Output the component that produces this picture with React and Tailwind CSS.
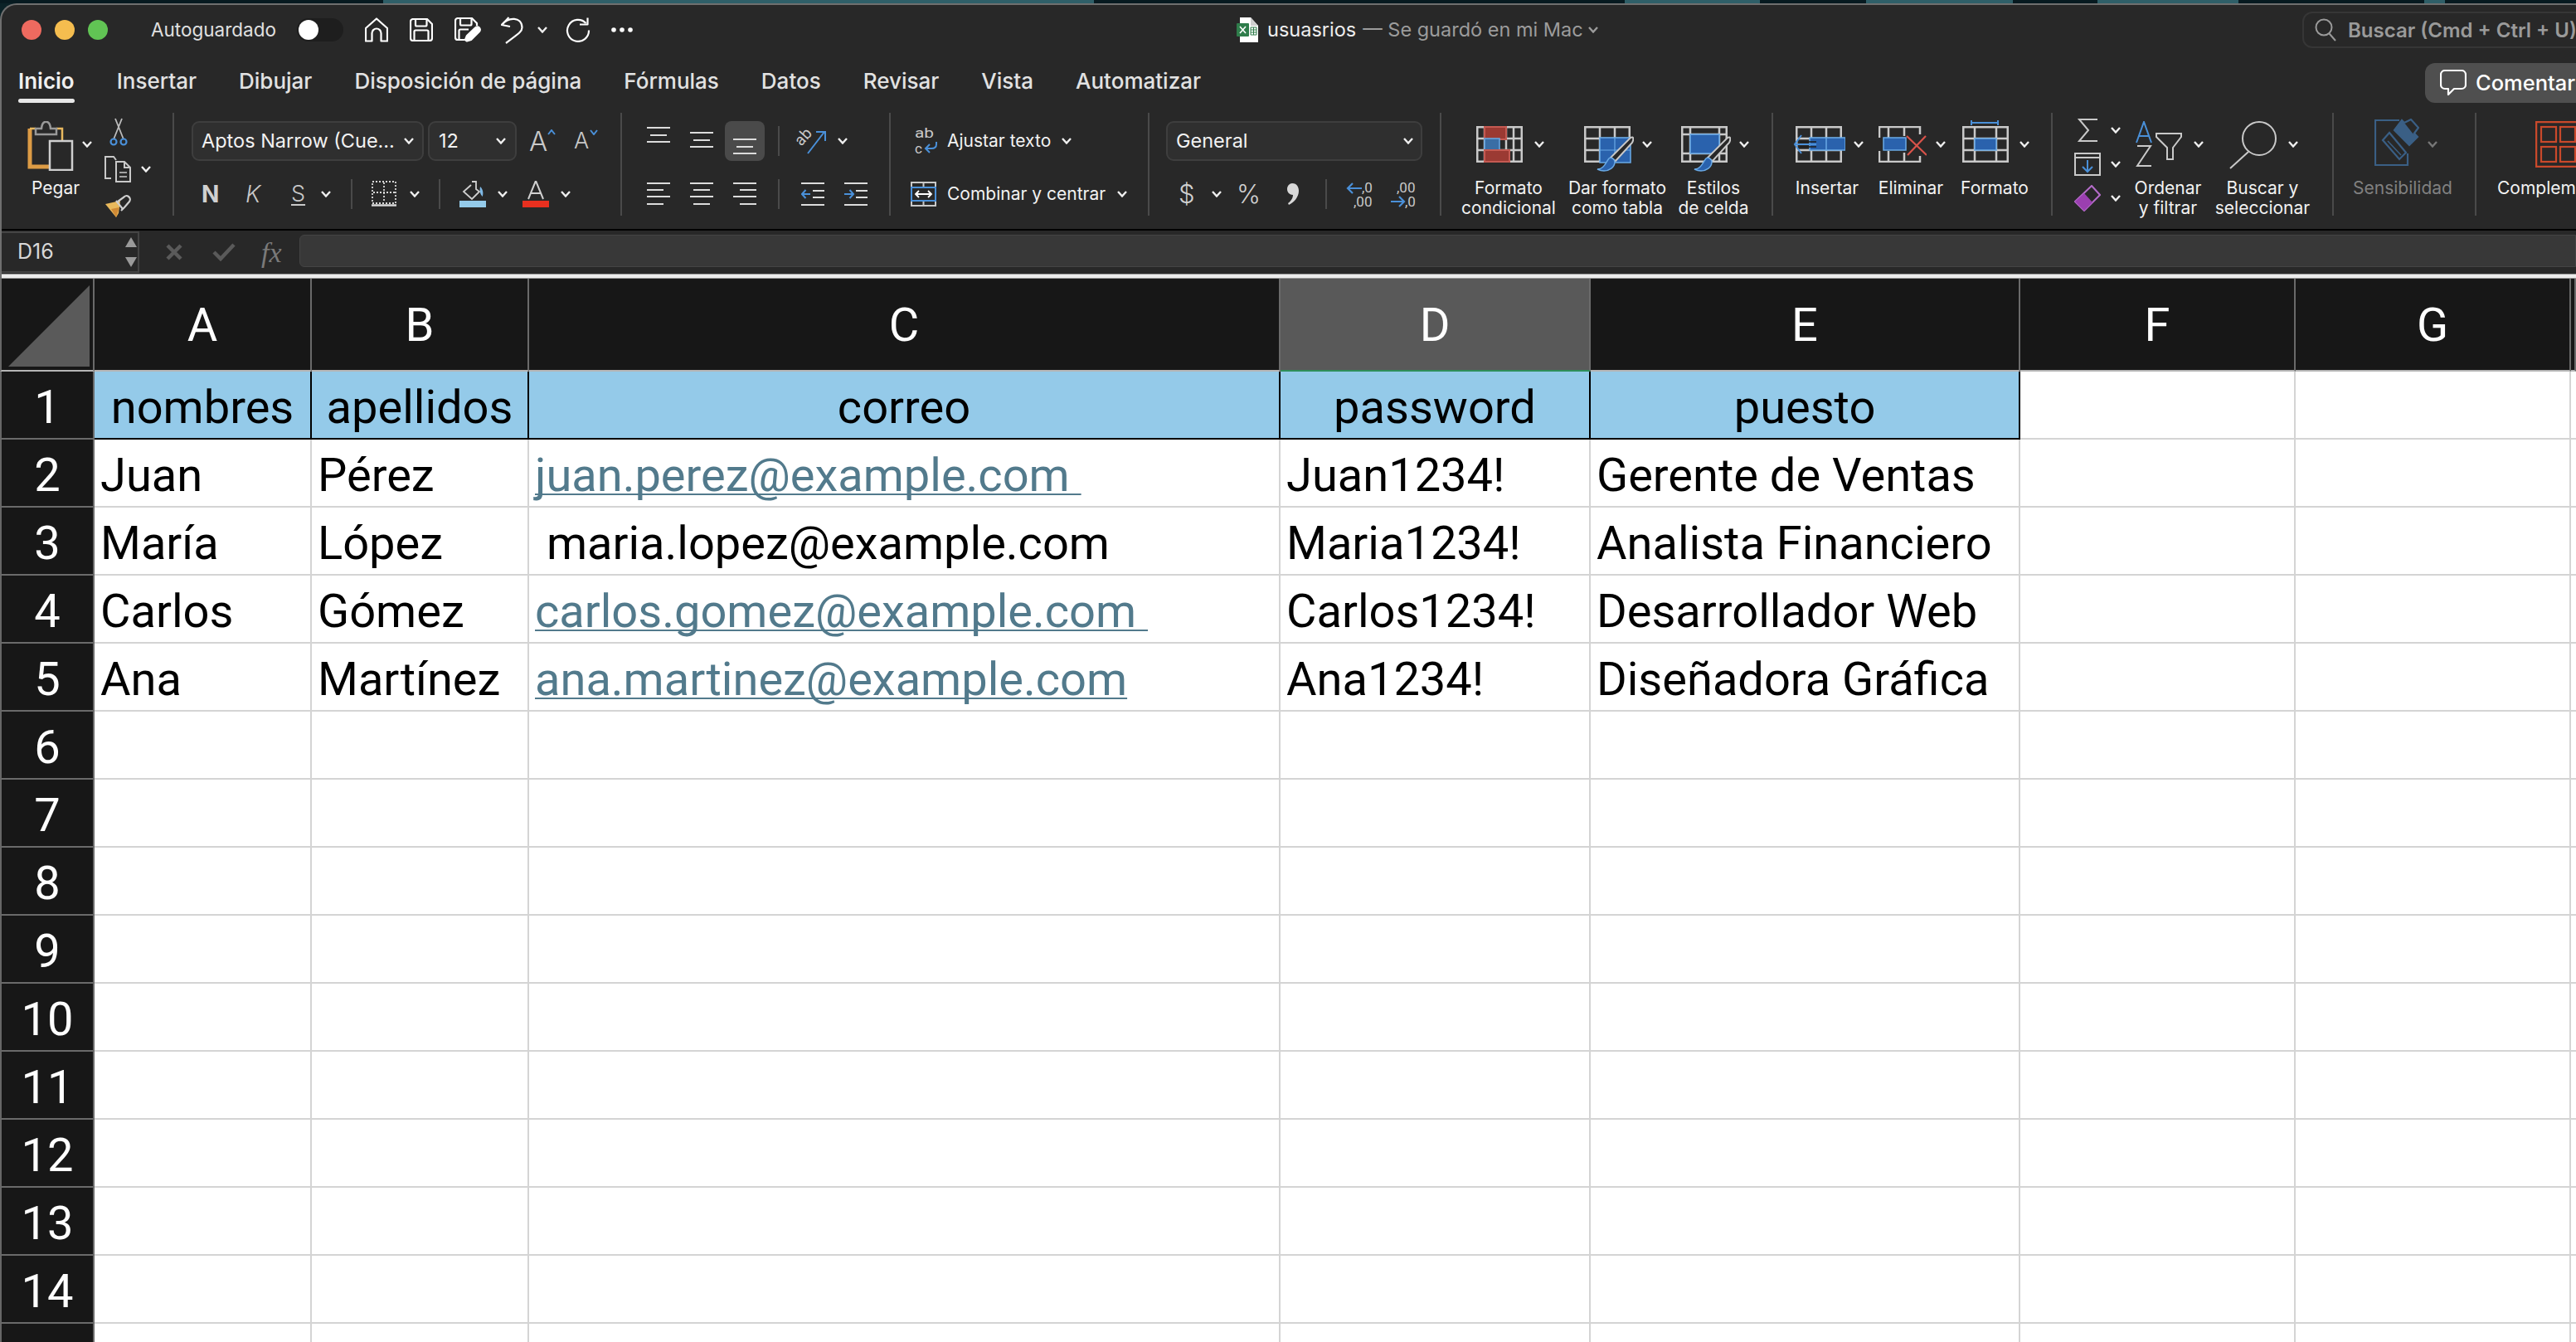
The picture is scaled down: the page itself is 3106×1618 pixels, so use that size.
import React from 'react';

const GRAY = '#c9c9c9';
const BLUE = '#4a90d9';

const Chev = ({ className = '', color = '#f0f0f0' }) => (
  <svg width="12" height="8" viewBox="0 0 12 8" className={`shrink-0 ${className}`}>
    <polyline points="1,1 6,6.5 11,1" fill="none" stroke={color} strokeWidth="2.4" />
  </svg>
);

const Sep = ({ className = '' }) => <div className={`w-[2px] h-[36px] bg-[#4a4a4a] shrink-0 ${className}`} />;

// title bar icons
const HomeIcon = () => (
  <svg width="28" height="30" viewBox="0 0 28 30" fill="none" stroke="#fff" strokeWidth="2.2" strokeLinejoin="round" className="shrink-0">
    <path d="M14 1.5 L27 13 V28.5 H19.5 V19 a5.5 5.5 0 0 0 -11 0 V28.5 H1 V13 Z" />
  </svg>
);
const SaveIcon = () => (
  <svg width="28" height="28" viewBox="0 0 28 28" fill="none" stroke="#fff" strokeWidth="2.2" strokeLinejoin="round" className="shrink-0">
    <path d="M4 1 H21 L27 7 V24 a3 3 0 0 1 -3 3 H4 a3 3 0 0 1 -3 -3 V4 a3 3 0 0 1 3 -3 Z" />
    <path d="M7 1 V8 a1.5 1.5 0 0 0 1.5 1.5 H19 a1.5 1.5 0 0 0 1.5 -1.5 V1" />
    <path d="M5.5 27 V16 a1.5 1.5 0 0 1 1.5 -1.5 H21 a1.5 1.5 0 0 1 1.5 1.5 V27" />
  </svg>
);
const SaveEditIcon = () => (
  <svg width="32" height="30" viewBox="0 0 32 30" fill="none" stroke="#fff" strokeWidth="2.2" strokeLinejoin="round" className="shrink-0">
    <path d="M12 27 H4 a3 3 0 0 1 -3 -3 V4 a3 3 0 0 1 3 -3 H21 L27 7 V10" />
    <path d="M7 1 V8 a1.5 1.5 0 0 0 1.5 1.5 H19 a1.5 1.5 0 0 0 1.5 -1.5 V1" />
    <path d="M5.5 27 V16 a1.5 1.5 0 0 1 1.5 -1.5 H17" />
    <path d="M15 28.5 L13 27 L15 22 L25 12.5 a3 3 0 0 1 5 4.5 L20 27 Z" fill="#fff" />
  </svg>
);
const UndoIcon = () => (
  <svg width="27" height="33" viewBox="0 0 27 33" fill="none" stroke="#fff" strokeWidth="2.2" strokeLinejoin="round" className="shrink-0">
    <path d="M9.5 1 L1 10 L11 12" />
    <path d="M1 10 C9 0 25 0 25.5 13 C25.5 18 22 20 6 32" />
  </svg>
);
const RedoIcon = () => (
  <svg width="30" height="30" viewBox="0 0 30 30" fill="none" stroke="#fff" strokeWidth="2.2" strokeLinejoin="round" className="shrink-0">
    <path d="M24.5 7 A13 13 0 1 0 28 15.5" />
    <path d="M26.5 0.5 V8.5 H17" />
  </svg>
);
const DotsIcon = () => (
  <svg width="26" height="6" viewBox="0 0 26 6" fill="#fff" className="shrink-0">
    <circle cx="3" cy="3" r="2.8" />
    <circle cx="13" cy="3" r="2.8" />
    <circle cx="23" cy="3" r="2.8" />
  </svg>
);
const ExcelIcon = () => (
  <svg width="26" height="30" viewBox="0 0 26 30" className="shrink-0">
    <path d="M4 0 H17 L26 10 V30 H4 Z" fill="#fff" />
    <path d="M17 0 V10 H26 Z" fill="#cfcfcf" />
    <rect x="0" y="7" width="15" height="16" rx="1" fill="#2f7d4b" />
    <path d="M4 11 L11 19 M11 11 L4 19" stroke="#fff" strokeWidth="1.6" />
    <path d="M17 12 h7 v9 h-7 z M17 15 h7 M17 18 h7 M20.5 12 v9" stroke="#2f7d4b" strokeWidth="1" fill="none" />
  </svg>
);
const SearchIcon = () => (
  <svg width="26" height="28" viewBox="0 0 26 28" fill="none" stroke="#9a9a9a" strokeWidth="2" className="shrink-0">
    <circle cx="11" cy="11" r="9.5" />
    <path d="M17.5 18.5 L25 27" />
  </svg>
);
const CommentIcon = () => (
  <svg width="32" height="32" viewBox="0 0 32 32" fill="none" stroke="#fff" strokeWidth="2.2" strokeLinejoin="round" className="shrink-0">
    <path d="M6 1 H26 a5 5 0 0 1 5 5 V18 a5 5 0 0 1 -5 5 H17 L10 30 V23 H6 a5 5 0 0 1 -5 -5 V6 a5 5 0 0 1 5 -5 Z" />
  </svg>
);

// clipboard
const PasteIcon = () => (
  <svg width="56" height="60" viewBox="0 0 56 60" fill="none" className="shrink-0">
    <path d="M3 9 V55 H30" stroke="#dd9c45" strokeWidth="5" />
    <path d="M3 9 H10 M35 9 H42 V24" stroke="#e8b85e" strokeWidth="2.5" />
    <path d="M10 16 V9 H17 C18 -2 27 -2 28 9 H35 V16 Z" stroke="#999" strokeWidth="2.5" fill="#282828" />
    <rect x="27" y="24" width="27" height="35" stroke="#cfcfcf" strokeWidth="2.5" fill="#282828" />
  </svg>
);
const ScissorsIcon = () => (
  <svg width="22" height="34" viewBox="0 0 22 34" fill="none" className="shrink-0">
    <path d="M5 26 L15 1 M17 26 L7 1" stroke="#bdbdbd" strokeWidth="1.8" />
    <circle cx="5" cy="29" r="3.5" stroke={BLUE} strokeWidth="2.2" />
    <circle cx="17" cy="29" r="3.5" stroke={BLUE} strokeWidth="2.2" />
  </svg>
);
const CopyIcon = () => (
  <svg width="32" height="32" viewBox="0 0 32 32" fill="none" stroke="#c9c9c9" strokeWidth="2" className="shrink-0">
    <path d="M8 27 H1 V1 H11 L14 5" />
    <path d="M14 7 H24 L31 14 V31 H14 Z" />
    <path d="M24 7 V14 H31" />
    <path d="M18 20 H27 M18 25 H27" strokeWidth="1.6" />
  </svg>
);
const BrushIcon = () => (
  <svg width="32" height="32" viewBox="0 0 32 32" fill="none" className="shrink-0">
    <path d="M1 14 L19 10 L17 25 L14 30 Z" fill="#e9b95c" />
    <path d="M8 20 L18 18 L14 30 Z" fill="#d08a35" />
    <path d="M16 11 L23 6 a3 3 0 0 1 7 5 L24 18 L20 22" stroke="#cfcfcf" strokeWidth="2.2" />
    <path d="M14 10 L22 20" stroke="#cfcfcf" strokeWidth="2.2" />
  </svg>
);

// font
const Caret = ({ up }) => (
  <svg width="10" height="7" viewBox="0 0 10 7" className="shrink-0">
    <polyline points={up ? '1,6 5,1 9,6' : '1,1 5,6 9,1'} fill="none" stroke={BLUE} strokeWidth="2" />
  </svg>
);
const BordersIcon = () => (
  <svg width="30" height="32" viewBox="0 0 30 32" fill="none" stroke="#d8d8d8" className="shrink-0">
    <rect x="1" y="1" width="28" height="26" strokeWidth="1.8" strokeDasharray="2 2" />
    <path d="M15 2 V26 M2 14 H28" strokeWidth="1.8" strokeDasharray="2 2" />
    <path d="M0 29.5 H30" strokeWidth="2.5" />
  </svg>
);
const FillIcon = () => (
  <svg width="32" height="32" viewBox="0 0 32 32" fill="none" className="shrink-0">
    <path d="M15 1 L20 1 L20 10 L24 13 L15 22 L5 13 L14 5" stroke="#d0d0d0" strokeWidth="1.8" />
    <path d="M25 7 C30 12 28 17 28 19 C25 17 24 12 25 7 Z" fill="#7fb9e6" />
    <rect x="0" y="24" width="32" height="8" fill="#94cbea" />
  </svg>
);
const FontColorIcon = () => (
  <svg width="32" height="32" viewBox="0 0 32 32" fill="none" className="shrink-0">
    <path d="M7 22 L16 0 L25 22 M10 15 H22" stroke="#d0d0d0" strokeWidth="2" />
    <rect x="0" y="24" width="32" height="8" fill="#e8301f" />
  </svg>
);

// alignment
const Lines = ({ rows, h = 34, color = '#dcdcdc' }) => (
  <svg width="28" height={h} viewBox={`0 0 28 ${h}`} className="shrink-0">
    {rows.map(([y, x, w], i) => (
      <rect key={i} x={x} y={y} width={w} height="2" fill={color} />
    ))}
  </svg>
);
const OrientIcon = () => (
  <svg width="34" height="32" viewBox="0 0 34 32" fill="none" className="shrink-0 overflow-visible">
    <text x="3" y="23" fontFamily="Roboto" fontSize="19" fill="#c9c9c9" transform="rotate(-48 3 23)">ab</text>
    <path d="M11 31 L31 5 M21 5 H32 V16" stroke={BLUE} strokeWidth="2" />
  </svg>
);
const IndentIcon = ({ dir }) => (
  <svg width="28" height="28" viewBox="0 0 28 28" fill="none" className="shrink-0">
    <path d="M0 1 H28 M14 10 H28 M14 18 H28 M0 27 H28" stroke="#dcdcdc" strokeWidth="2" />
    {dir === 'l' ? (
      <path d="M11 14 H1 M5.5 9 L1 14 L5.5 19" stroke={BLUE} strokeWidth="2" />
    ) : (
      <path d="M0 14 H11 M6.5 9 L11 14 L6.5 19" stroke={BLUE} strokeWidth="2" />
    )}
  </svg>
);
const WrapIcon = () => (
  <svg width="28" height="32" viewBox="0 0 28 32" fill="none" className="shrink-0 overflow-visible">
    <text x="0" y="12" fontFamily="Roboto" fontSize="17" fill="#c9c9c9" textLength="23" lengthAdjust="spacingAndGlyphs">ab</text>
    <text x="0" y="31" fontFamily="Roboto" fontSize="17" fill="#c9c9c9">c</text>
    <path d="M26 17 V20 C26 24 23 25 20 25 H13 M18 20 L13 25 L18 30" stroke={BLUE} strokeWidth="2" />
  </svg>
);
const MergeIcon = () => (
  <svg width="31" height="30" viewBox="0 0 31 30" fill="none" className="shrink-0">
    <rect x="1" y="1" width="29" height="28" stroke="#c9c9c9" strokeWidth="2" />
    <path d="M15.5 1 V7 M15.5 23 V29" stroke="#c9c9c9" strokeWidth="2" />
    <rect x="1" y="7" width="29" height="16" stroke={BLUE} strokeWidth="2" />
    <path d="M6 15 H25 M10 11 L6 15 L10 19 M21 11 L25 15 L21 19" stroke="#fff" strokeWidth="1.8" />
  </svg>
);

// number
const CommaIcon = () => (
  <svg width="14" height="26" viewBox="0 0 14 26" className="shrink-0">
    <path d="M6 0 C12 0 14 5 14 9 C14 17 8 23 2 26 L1 24 C4 22 7 18 7 14 C3 14 0 11 0 7 C0 3 3 0 6 0 Z" fill="#d8d8d8" />
  </svg>
);
const DecLess = () => (
  <svg width="31" height="32" viewBox="0 0 31 32" fill="none" className="shrink-0 overflow-visible">
    <path d="M18 9 H1 M7 3 L1 9 L7 15" stroke={BLUE} strokeWidth="2.2" />
    <text x="18" y="14" fontFamily="Roboto" fontSize="17" fill="#c9c9c9">,0</text>
    <text x="8" y="31" fontFamily="Roboto" fontSize="17" fill="#c9c9c9">,00</text>
  </svg>
);
const DecMore = () => (
  <svg width="31" height="32" viewBox="0 0 31 32" fill="none" className="shrink-0 overflow-visible">
    <text x="8" y="14" fontFamily="Roboto" fontSize="17" fill="#c9c9c9">,00</text>
    <path d="M1 25 H17 M11 19 L17 25 L11 31" stroke={BLUE} strokeWidth="2.2" />
    <text x="18" y="31" fontFamily="Roboto" fontSize="17" fill="#c9c9c9">,0</text>
  </svg>
);

// styles and cells
const GridLines = ({ x0 = 0, w = 56, xs, ys = [15, 29], h = 44 }) => (
  <g stroke={GRAY} strokeWidth="2.5" fill="none">
    <rect x={x0 + 1.25} y="1.25" width={w - 2.5} height={h - 2.5} />
    {xs.map((x) => <path key={x} d={`M${x0 + x} 1 V${h - 1}`} />)}
    {ys.map((y) => <path key={y} d={`M${x0 + 1} ${y} H${x0 + w - 1}`} />)}
  </g>
);
const CondIcon = () => (
  <svg width="56" height="44" viewBox="0 0 56 44" className="shrink-0">
    <GridLines xs={[10, 36, 45]} />
    <rect x="10" y="1" width="26" height="15" fill="#9b3a33" stroke="#c55a52" strokeWidth="2" />
    <rect x="10" y="15" width="18" height="14" fill="#3a6ea5" stroke="#6aaae6" strokeWidth="1.5" />
    <rect x="10" y="29" width="30" height="14" fill="#9b3a33" stroke="#c55a52" strokeWidth="2" />
  </svg>
);
const PaintBrush = () => (
  <g>
    <path d="M56 14 C60 12 60 16 58 20 L38 42 L32 38 Z" fill="#282828" stroke="#c9c9c9" strokeWidth="2" />
    <path d="M16 52 C24 52 26 44 30 39 C33 37 37 40 37 43 C37 50 30 54 24 54 C21 54 18 53 16 52 Z" fill="#2a62ad" stroke="#6aaae6" strokeWidth="1.5" />
  </g>
);
const TableIcon = () => (
  <svg width="60" height="55" viewBox="0 0 60 55" className="shrink-0">
    <GridLines xs={[19, 37]} />
    <rect x="19" y="14" width="37" height="30" fill="#2a62ad" stroke="#6aaae6" strokeWidth="1.5" />
    <path d="M37 14 V44 M19 29 H56" stroke="#6aaae6" strokeWidth="1.2" />
    <PaintBrush />
  </svg>
);
const CellStyleIcon = () => (
  <svg width="60" height="55" viewBox="0 0 60 55" className="shrink-0">
    <GridLines xs={[11, 46]} ys={[10, 33]} />
    <rect x="11" y="10" width="35" height="23" fill="#2a62ad" stroke="#6aaae6" strokeWidth="1.5" />
    <PaintBrush />
  </svg>
);
const InsertIcon = () => (
  <svg width="63" height="44" viewBox="0 0 63 44" className="shrink-0">
    <GridLines x0={3} xs={[19, 37]} />
    <rect x="20" y="14" width="43" height="15" fill="#2a62ad" stroke="#6aaae6" strokeWidth="1.5" />
    <path d="M40 14 V29" stroke="#6aaae6" strokeWidth="1.5" />
    <path d="M10 11 L2 22 L10 33 M2 22 H28" fill="none" stroke={BLUE} strokeWidth="2" />
    <path d="M8 19 H28 M8 25 H28" stroke="#1d1d1d" strokeWidth="1.5" />
  </svg>
);
const DeleteIcon = () => (
  <svg width="58" height="44" viewBox="0 0 58 44" fill="none" className="shrink-0">
    <path d="M12 1 H1 V14 M1 30 V43 H12 M12 43 V30 M12 14 V1 M12 1 H31 M12 43 H31 M31 1 V12 M31 32 V43 M31 1 H50 V10 M31 43 H50 V36" stroke={GRAY} strokeWidth="2.5" />
    <rect x="6" y="14" width="27" height="15" fill="#2a62ad" stroke="#6aaae6" strokeWidth="1.5" />
    <path d="M34 12 L58 35 M57 12 L35 35" stroke="#d9534a" strokeWidth="2.2" />
  </svg>
);
const FormatIcon = () => (
  <svg width="56" height="53" viewBox="0 0 56 53" className="shrink-0">
    <path d="M11 2 V8 M43 2 V8 M11 5 H43" stroke={BLUE} strokeWidth="2" />
    <g transform="translate(0 9)">
      <GridLines xs={[15, 41]} />
      <rect x="15" y="15" width="26" height="14" fill="#2a62ad" stroke="#6aaae6" strokeWidth="1.5" />
    </g>
  </svg>
);

// editing
const SigmaIcon = () => (
  <svg width="32" height="28" viewBox="0 0 32 28" fill="none" className="shrink-0">
    <path d="M28 1 H6 L17 14 L6 27 H28" stroke="#c9c9c9" strokeWidth="2" />
  </svg>
);
const FillDownIcon = () => (
  <svg width="32" height="28" viewBox="0 0 32 28" fill="none" className="shrink-0">
    <rect x="1" y="1" width="30" height="26" stroke="#c9c9c9" strokeWidth="2" />
    <path d="M1 6 H31" stroke="#c9c9c9" strokeWidth="2" />
    <path d="M16 9 V23 M10 17 L16 23 L22 17" stroke={BLUE} strokeWidth="2" />
  </svg>
);
const EraserIcon = () => (
  <svg width="32" height="32" viewBox="0 0 32 32" fill="none" className="shrink-0">
    <path d="M21 1 L31 12 L12 31 L1 20 Z" stroke="#b46cc9" strokeWidth="2" />
    <path d="M12 10 L22 21 L12 31 L1 20 Z" fill="#9b3fb0" />
  </svg>
);
const SortIcon = () => (
  <svg width="56" height="56" viewBox="0 0 56 56" fill="none" className="shrink-0">
    <path d="M1 26 L10 1 L19 26 M4 18 H16" stroke={BLUE} strokeWidth="2" />
    <path d="M2 30 H18 L2 54 H19" stroke="#c9c9c9" strokeWidth="2" />
    <path d="M25 15 H55 V19 L45 32 V46 H38 V32 L25 19 Z" stroke="#c9c9c9" strokeWidth="2" />
  </svg>
);
const FindIcon = () => (
  <svg width="58" height="58" viewBox="0 0 58 58" fill="none" stroke="#c9c9c9" strokeWidth="2" className="shrink-0">
    <ellipse cx="37" cy="21" rx="20" ry="20" />
    <path d="M24 37 L2 57" />
  </svg>
);
const SensIcon = () => (
  <svg width="54" height="58" viewBox="0 0 54 58" fill="none" stroke="#3a5f85" strokeWidth="2.2" className="shrink-0">
    <path d="M30 2 H1 V56 H40 V42" />
    <path d="M10 26 L18 17 L38 41 L30 49 Z" />
    <path d="M16 27 L32 44" strokeWidth="1.5" />
    <path d="M24 14 L33 2 L52 22 L42 32 Z" fill="#3a5f85" />
    <path d="M36 5 L44 1 L53 11 L47 19" fill="#282828" />
  </svg>
);
const AddinIcon = () => (
  <svg width="56" height="56" viewBox="0 0 56 56" fill="none" stroke="#c9492b" strokeWidth="2.2" className="shrink-0">
    <rect x="1" y="1" width="54" height="54" strokeWidth="2.5" />
    <rect x="7" y="7" width="18" height="18" />
    <rect x="30" y="7" width="18" height="18" />
    <rect x="7" y="31" width="18" height="18" />
    <rect x="30" y="31" width="18" height="18" />
  </svg>
);

const tabs = ['Inicio', 'Insertar', 'Dibujar', 'Disposición de página', 'Fórmulas', 'Datos', 'Revisar', 'Vista', 'Automatizar'];

const alignTop = [[0, 0, 28], [9, 4, 20], [17, 0, 28]];
const alignMid = [[6, 0, 28], [15, 4, 20], [23, 0, 28]];
const alignBot = [[14, 0, 28], [23, 4, 20], [31, 0, 28]];
const alignL = [[0, 0, 28], [8, 0, 20], [16, 0, 28], [25, 0, 20]];
const alignC = [[0, 0, 28], [8, 4, 20], [16, 0, 28], [25, 4, 20]];
const alignR = [[0, 0, 28], [8, 8, 20], [16, 0, 28], [25, 8, 20]];

const Label = ({ lines, className = 'text-[#f2f2f2]' }) => (
  <div className={`text-[21px] leading-[24px] text-center whitespace-nowrap ${className}`}>
    {lines.map((l) => <div key={l}>{l}</div>)}
  </div>
);

const Ribbon = () => (
  <div className="flex h-[124px] mt-[12px]">
    {/* Portapapeles */}
    <div className="flex w-[208px] border-r-2 border-[#4a4a4a] shrink-0">
      <div className="w-[122px] pt-[10px] shrink-0">
        <div className="flex items-start h-[69px] pl-[31px]">
          <PasteIcon />
          <Chev className="mt-[24px] ml-[10px]" />
        </div>
        <div className="ml-[36px] text-[21px] leading-[24px] text-[#f2f2f2]">Pegar</div>
      </div>
      <div className="flex flex-col gap-[12px] pt-[6px]">
        <div className="ml-[8px] h-[34px]"><ScissorsIcon /></div>
        <div className="flex items-center ml-[2px] h-[32px]">
          <CopyIcon />
          <Chev className="ml-[12px]" />
        </div>
        <div className="ml-[2px] h-[32px]"><BrushIcon /></div>
      </div>
    </div>

    {/* Fuente */}
    <div className="flex flex-col gap-[24px] pt-[10px] w-[540px] border-r-2 border-[#4a4a4a] shrink-0">
      <div className="flex items-center h-[48px]">
        <div className="flex items-center justify-between ml-[21px] w-[280px] h-[48px] px-[10px] bg-[#2f2f2f] border-2 border-[#3e3e3e] rounded-[9px] shrink-0">
          <span className="text-[23.5px] text-[#f2f2f2] whitespace-nowrap">Aptos Narrow (Cue...</span>
          <Chev />
        </div>
        <div className="flex items-center justify-between ml-[5px] w-[107px] h-[48px] px-[11px] bg-[#2f2f2f] border-2 border-[#3e3e3e] rounded-[9px] shrink-0">
          <span className="text-[23.5px] text-[#f2f2f2]">12</span>
          <Chev />
        </div>
        <div className="flex items-start ml-[15px] w-[30px] shrink-0">
          <span className="text-[33px] leading-[36px] font-light text-[#c9c9c9]">A</span>
          <span className="mt-[4px]"><Caret up /></span>
        </div>
        <div className="flex items-start ml-[24px] shrink-0">
          <span className="text-[27px] leading-[36px] font-light text-[#c9c9c9]">A</span>
          <span className="mt-[4px] ml-[1px]"><Caret /></span>
        </div>
      </div>
      <div className="flex items-center h-[32px]">
        <span className="ml-[33px] w-[20px] text-[28px] leading-[32px] font-bold text-[#d0d0d0]">N</span>
        <span className="ml-[33px] w-[19px] text-[28px] leading-[32px] italic font-light text-[#c9c9c9]">K</span>
        <span className="ml-[36px] w-[15px] text-[27px] leading-[30px] font-light text-[#c9c9c9] underline underline-offset-[3px]">S</span>
        <Chev className="ml-[21px]" />
        <Sep className="ml-[24px]" />
        <div className="ml-[23px]"><BordersIcon /></div>
        <Chev className="ml-[16px]" />
        <Sep className="ml-[23px]" />
        <div className="ml-[23px]"><FillIcon /></div>
        <Chev className="ml-[14px]" />
        <div className="ml-[18px]"><FontColorIcon /></div>
        <Chev className="ml-[14px]" />
      </div>
    </div>

    {/* Alineación */}
    <div className="flex flex-col gap-[24px] pt-[10px] w-[324px] border-r-2 border-[#4a4a4a] shrink-0">
      <div className="flex items-center h-[48px]">
        <div className="ml-[30px]"><Lines rows={alignTop} /></div>
        <div className="ml-[24px]"><Lines rows={alignMid} /></div>
        <div className="flex items-center justify-center ml-[14px] w-[48px] h-[48px] bg-[#4a4a4a] rounded-[8px]"><Lines rows={alignBot} /></div>
        <Sep className="ml-[16px]" />
        <div className="ml-[23px]"><OrientIcon /></div>
        <Chev className="ml-[13px]" />
      </div>
      <div className="flex items-center h-[32px]">
        <div className="ml-[30px]"><Lines rows={alignL} h={28} /></div>
        <div className="ml-[24px]"><Lines rows={alignC} h={28} /></div>
        <div className="ml-[24px]"><Lines rows={alignR} h={28} /></div>
        <Sep className="ml-[26px]" />
        <div className="ml-[26px]"><IndentIcon dir="l" /></div>
        <div className="ml-[24px]"><IndentIcon dir="r" /></div>
      </div>
    </div>

    {/* Ajustar */}
    <div className="flex flex-col gap-[24px] pt-[10px] w-[312px] border-r-2 border-[#4a4a4a] shrink-0">
      <div className="flex items-center h-[48px]">
        <div className="ml-[29px]"><WrapIcon /></div>
        <span className="ml-[11px] w-[127px] text-[21px] text-[#f2f2f2] whitespace-nowrap">Ajustar texto</span>
        <Chev className="ml-[11px]" />
      </div>
      <div className="flex items-center h-[32px]">
        <div className="ml-[24px]"><MergeIcon /></div>
        <span className="ml-[13px] w-[193px] text-[21px] text-[#f2f2f2] whitespace-nowrap">Combinar y centrar</span>
        <Chev className="ml-[12px]" />
      </div>
    </div>

    {/* Número */}
    <div className="flex flex-col gap-[24px] pt-[10px] w-[352px] border-r-2 border-[#4a4a4a] shrink-0">
      <div className="flex items-center h-[48px]">
        <div className="flex items-center justify-between ml-[20px] w-[309px] h-[48px] px-[10px] bg-[#2f2f2f] border-2 border-[#3e3e3e] rounded-[9px] shrink-0">
          <span className="text-[23.5px] text-[#f2f2f2]">General</span>
          <Chev className="mr-[-1px]" />
        </div>
      </div>
      <div className="flex items-center h-[32px]">
        <span className="ml-[35px] w-[16px] text-[31px] leading-[32px] font-light text-[#d0d0d0]">$</span>
        <Chev className="ml-[24px]" />
        <span className="ml-[18px] w-[30px] text-[31px] leading-[32px] font-light text-[#d0d0d0]">%</span>
        <div className="ml-[31px]"><CommaIcon /></div>
        <Sep className="ml-[32px]" />
        <div className="ml-[24px]"><DecLess /></div>
        <div className="ml-[21px]"><DecMore /></div>
      </div>
    </div>

    {/* Estilos */}
    <div className="flex w-[400px] border-r-2 border-[#4a4a4a] shrink-0">
      <div className="ml-[22px] w-[118px] shrink-0">
        <div className="flex items-start h-[79px] pt-[16px] pl-[20px]">
          <CondIcon />
          <Chev className="ml-[14px] mt-[18px]" />
        </div>
        <Label lines={['Formato', 'condicional']} />
      </div>
      <div className="ml-[12px] w-[120px] shrink-0">
        <div className="flex items-start h-[79px] pt-[16px] pl-[20px]">
          <TableIcon />
          <Chev className="ml-[10px] mt-[18px]" />
        </div>
        <Label lines={['Dar formato', 'como tabla']} />
      </div>
      <div className="ml-[6px] w-[100px] shrink-0">
        <div className="flex items-start h-[79px] pt-[16px] pl-[11px]">
          <CellStyleIcon />
          <Chev className="ml-[10px] mt-[18px]" />
        </div>
        <Label lines={['Estilos', 'de celda']} />
      </div>
    </div>

    {/* Celdas */}
    <div className="flex w-[337px] border-r-2 border-[#4a4a4a] shrink-0">
      <div className="ml-[15px] w-[100px] shrink-0">
        <div className="flex items-start h-[79px] pt-[16px] pl-[9px]">
          <InsertIcon />
          <Chev className="ml-[10px] mt-[18px]" />
        </div>
        <Label lines={['Insertar']} />
      </div>
      <div className="ml-[1px] w-[100px] shrink-0">
        <div className="flex items-start h-[79px] pt-[16px] pl-[11px]">
          <DeleteIcon />
          <Chev className="ml-[11px] mt-[18px]" />
        </div>
        <Label lines={['Eliminar']} />
      </div>
      <div className="ml-[1px] w-[100px] shrink-0">
        <div className="flex items-start h-[79px] pt-[7px] pl-[11px]">
          <FormatIcon />
          <Chev className="ml-[13px] mt-[27px]" />
        </div>
        <Label lines={['Formato']} />
      </div>
    </div>

    {/* Edición */}
    <div className="flex w-[339px] border-r-2 border-[#4a4a4a] shrink-0">
      <div className="flex flex-col ml-[26px] w-[56px] shrink-0">
        <div className="flex items-center h-[44px]"><SigmaIcon /><Chev className="ml-[12px]" /></div>
        <div className="flex items-center h-[44px]"><FillDownIcon /><Chev className="ml-[12px]" /></div>
        <div className="flex items-center h-[44px]"><EraserIcon /><Chev className="ml-[12px]" /></div>
      </div>
      <div className="ml-[7px] w-[100px] shrink-0">
        <div className="flex items-start h-[79px] pt-[10px] pl-[11px]">
          <SortIcon />
          <Chev className="ml-[14px] mt-[24px]" />
        </div>
        <Label lines={['Ordenar', 'y filtrar']} />
      </div>
      <div className="ml-[4px] w-[120px] shrink-0">
        <div className="flex items-start h-[79px] pt-[10px] pl-[19px]">
          <FindIcon />
          <Chev className="ml-[14px] mt-[24px]" />
        </div>
        <Label lines={['Buscar y', 'seleccionar']} />
      </div>
    </div>

    {/* Sensibilidad */}
    <div className="flex w-[172px] border-r-2 border-[#4a4a4a] shrink-0">
      <div className="ml-[8px] w-[150px] shrink-0">
        <div className="flex items-start h-[79px] pt-[7px] pl-[41px]">
          <SensIcon />
          <Chev className="ml-[10px] mt-[27px]" color="#777" />
        </div>
        <Label lines={['Sensibilidad']} className="text-[#808080]" />
      </div>
    </div>

    {/* Complementos */}
    <div className="ml-[25px] w-[140px] shrink-0">
      <div className="h-[79px] pt-[10px] pl-[46px]"><AddinIcon /></div>
      <div className="text-[21px] leading-[24px] text-[#f2f2f2] whitespace-nowrap">Complementos</div>
    </div>
  </div>
);

const cols = ['A', 'B', 'C', 'D', 'E', 'F', 'G', ''];

const data = [
  ['nombres', 'apellidos', 'correo', 'password', 'puesto'],
  ['Juan', 'Pérez', 'juan.perez@example.com\u00a0', 'Juan1234!', 'Gerente de Ventas'],
  ['María', 'López', '\u00a0maria.lopez@example.com', 'Maria1234!', 'Analista Financiero'],
  ['Carlos', 'Gómez', 'carlos.gomez@example.com\u00a0', 'Carlos1234!', 'Desarrollador Web'],
  ['Ana', 'Martínez', 'ana.martinez@example.com', 'Ana1234!', 'Diseñadora Gráfica'],
];

const Sheet = () => (
  <div className="grid grid-cols-[114px_262px_262px_906px_374px_518px_332px_332px_6px] grid-rows-[112px] auto-rows-[82px] bg-white font-['Roboto',sans-serif] text-[56px] leading-[64px] text-black">
    {/* cabecera de columnas */}
    <div className="flex items-end bg-[#171717] border-l-2 border-r-2 border-b-2 border-l-[#666] border-r-[#6a6a6a] border-b-[#b5b5b5] pb-[4px] pl-[8px]">
      <svg width="98" height="98" viewBox="0 0 98 98"><path d="M98 0 V98 H0 Z" fill="#5a5a5a" /></svg>
    </div>
    {cols.map((c, i) => (
      <div
        key={i}
        className={`flex items-center justify-center pt-[2px] text-white border-r-2 border-b-2 border-r-[#6a6a6a] ${
          c === 'D' ? 'bg-[#595959] border-b-[#2f8f5a]' : 'bg-[#171717] border-b-[#b5b5b5]'
        }`}
      >
        {c}
      </div>
    ))}

    {Array.from({ length: 15 }).map((_, r) => (
      <React.Fragment key={r}>
        <div className="flex items-end justify-center pb-[5px] bg-[#171717] text-white border-l-2 border-r-2 border-b-2 border-l-[#666] border-r-[#6a6a6a] border-b-[#6a6a6a]">
          {r + 1}
        </div>
        {cols.map((_, c) => {
          const value = data[r] && data[r][c];
          const isHead = r === 0 && c < 5;
          const isLink = c === 2 && (r === 1 || r === 3 || r === 4);
          return (
            <div
              key={c}
              className={`flex items-end pb-[5px] whitespace-nowrap border-r-2 border-b-2 ${
                isHead ? 'justify-center bg-[#94cae9] border-black' : 'pl-[7px] border-[#d4d4d4]'
              }`}
            >
              {isLink ? (
                <span className="text-[#527a8c] underline decoration-[2px] underline-offset-[3px] [text-decoration-skip-ink:none]">{value}</span>
              ) : (
                value
              )}
            </div>
          );
        })}
      </React.Fragment>
    ))}
  </div>
);

export default function App() {
  return (
    <div className="w-[3106px] h-[1618px] overflow-hidden bg-[#0b2227] font-['Inter',sans-serif]">
      {/* fondo del escritorio que asoma arriba */}
      <div className="flex h-[4px]">
        <div className="w-[462px] bg-[#071a20]" />
        <div className="w-[857px] bg-[#2f5f68]" />
        <div className="w-[640px] bg-[#071a20]" />
        <div className="w-[163px] bg-[#2f5f68]" />
        <div className="w-[128px] bg-[#071a20]" />
        <div className="w-[177px] bg-[#2f5f68]" />
        <div className="w-[102px] bg-[#071a20]" />
        <div className="w-[170px] bg-[#2f5f68]" />
        <div className="w-[224px] bg-[#071a20]" />
        <div className="w-[25px] bg-[#2f5f68]" />
        <div className="w-[158px] bg-[#071a20]" />
      </div>
      <div className="bg-[#282828] border-t-2 border-l-2 border-[#6f6f6f] rounded-tl-[20px]">
        {/* Barra de titulo */}
        <div className="flex items-center h-[60px]">
          <div className="flex items-center w-[1489px] shrink-0">
            <div className="flex items-center gap-[16px] ml-[24px]">
              <div className="w-[24px] h-[24px] rounded-full bg-[#ee6a5f]" />
              <div className="w-[24px] h-[24px] rounded-full bg-[#f5bd4f]" />
              <div className="w-[24px] h-[24px] rounded-full bg-[#61c454]" />
            </div>
            <span className="ml-[52px] w-[151px] text-[22.5px] text-[#e0e0e0] whitespace-nowrap">Autoguardado</span>
            <div className="flex items-center ml-[25px] w-[56px] h-[28px] pl-[2px] rounded-full bg-[#1e1e1e]">
              <div className="w-[24px] h-[24px] rounded-full bg-white" />
            </div>
            <div className="ml-[26px]"><HomeIcon /></div>
            <div className="ml-[26px]"><SaveIcon /></div>
            <div className="ml-[26px]"><SaveEditIcon /></div>
            <div className="ml-[24px]"><UndoIcon /></div>
            <Chev className="ml-[17px]" />
            <div className="ml-[22px]"><RedoIcon /></div>
            <div className="ml-[25px]"><DotsIcon /></div>
          </div>
          <div className="flex items-center w-[1285px] shrink-0">
            <ExcelIcon />
            <span className="ml-[11px] text-[23.5px] text-[#eeeeee] whitespace-nowrap">usuasrios</span>
            <span className="ml-[8px] text-[23.5px] text-[#9c9c9c] whitespace-nowrap">— Se guardó en mi Mac</span>
            <Chev className="ml-[6px]" color="#9c9c9c" />
          </div>
          <div className="flex items-center w-[400px] h-[44px] pl-[13px] border-2 border-[#363636] rounded-[12px] shrink-0">
            <SearchIcon />
            <span className="ml-[14px] mt-[1px] text-[24px] font-semibold text-[#9a9a9a] whitespace-nowrap">Buscar (Cmd + Ctrl + U)</span>
          </div>
        </div>

        {/* Pestañas */}
        <div className="flex items-start h-[58px]">
          <div className="flex gap-[51px] w-[2922px] pl-[20px] shrink-0">
            {tabs.map((t, i) => (
              <div key={t} className="flex flex-col">
                <div className={`flex items-center h-[53px] pt-[9px] text-[26px] whitespace-nowrap ${i === 0 ? 'font-semibold text-[#f0f0f0]' : 'font-medium text-[#e2e2e2]'}`}>{t}</div>
                <div className={`h-[5px] rounded-full ${i === 0 ? 'bg-[#e8e8e8]' : ''}`} />
              </div>
            ))}
          </div>
          <div className="flex items-center w-[200px] h-[48px] mt-[10px] pl-[18px] bg-[#4f4f4f] rounded-[12px] shrink-0">
            <CommentIcon />
            <span className="ml-[11px] text-[25.5px] font-medium text-white whitespace-nowrap">Comentar</span>
          </div>
        </div>

        <Ribbon />

        <div className="h-[18px] border-b-2 border-black" />

        {/* Barra de formulas */}
        <div className="flex items-center h-[52px]">
          <div className="flex items-center justify-between w-[166px] h-[50px] pl-[19px] pr-[1px] border-2 border-[#444] border-l-0 shrink-0">
            <span className="text-[25px] text-[#d8d8d8]">D16</span>
            <div className="flex flex-col gap-[12px]">
              <svg width="14" height="12" viewBox="0 0 14 12"><path d="M7 0 L14 12 H0 Z" fill="#9a9a9a" /></svg>
              <svg width="14" height="12" viewBox="0 0 14 12"><path d="M7 12 L14 0 H0 Z" fill="#9a9a9a" /></svg>
            </div>
          </div>
          <svg width="20" height="20" viewBox="0 0 20 20" className="ml-[32px] shrink-0"><path d="M2 2 L18 18 M18 2 L2 18" stroke="#5a5a5a" strokeWidth="4.5" /></svg>
          <svg width="28" height="22" viewBox="0 0 28 22" className="ml-[36px] shrink-0"><path d="M2 11 L10 19 L26 2" fill="none" stroke="#5a5a5a" strokeWidth="4.5" /></svg>
          <span className="ml-[31px] w-[46px] shrink-0 font-['Liberation_Serif',serif] italic text-[34px] text-[#7a7a7a]">fx</span>
          <div className="flex-1 h-[39px] -mt-[3px] bg-[#383838] border border-[#444] rounded-l-[6px]" />
        </div>

        <div className="h-[6px] bg-[#ececec] border-y border-[#9a9a9a]" />
      </div>
      <Sheet />
    </div>
  );
}
